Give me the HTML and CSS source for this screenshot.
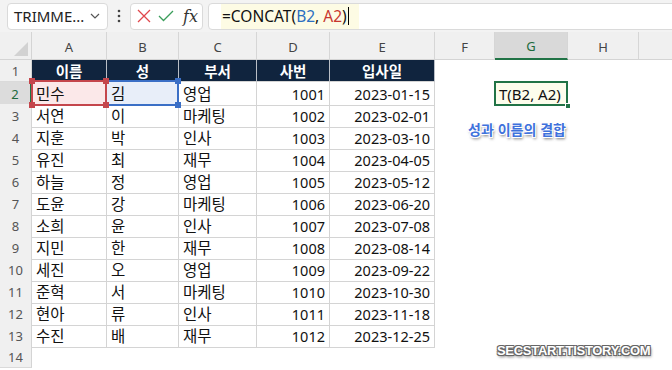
FILE: index.html
```html
<!DOCTYPE html>
<html lang="ko">
<head>
    <meta charset="UTF-8">
    <title>CONCAT</title>
    <link rel="stylesheet" href="styles.css">
</head>
<body>
    <div class="toolbar">
        <div class="namebox">
            <span>TRIMME...</span>
            <svg class="chev" width="10" height="6" viewBox="0 0 10 6"><path d="M1 1l4 4 4-4" fill="none" stroke="#555" stroke-width="1.2"/></svg>
        </div>
        <svg class="kebab" width="4" height="14" viewBox="0 0 4 14"><circle cx="2" cy="2" r="1.3" fill="#444"/><circle cx="2" cy="7" r="1.3" fill="#444"/><circle cx="2" cy="12" r="1.3" fill="#444"/></svg>
        <div class="btns">
            <svg width="14" height="14" viewBox="0 0 14 14"><path d="M1 1l12 12M13 1L1 13" stroke="#e0474c" stroke-width="1.3" fill="none"/></svg>
            <svg width="16" height="12" viewBox="0 0 16 12"><path d="M1 6l4.5 4.5L15 1" stroke="#3a9d5a" stroke-width="1.3" fill="none"/></svg>
            <span class="fx">fx</span>
        </div>
        <div class="formula">
            <span class="hl">=CONCAT(<span class="blue">B2</span>, <span class="red">A2</span>)<i class="caret"></i></span>
        </div>
    </div>

    <div class="sheet">
        <div class="row colhead">
            <div class="corner"></div>
            <div class="ch">A</div><div class="ch">B</div><div class="ch">C</div><div class="ch">D</div>
            <div class="ch">E</div><div class="ch">F</div><div class="ch active">G</div><div class="ch">H</div><div class="ch last"></div>
        </div>
        <div class="row">
            <div class="rh">1</div>
            <div class="c th">이름</div><div class="c th">성</div><div class="c th">부서</div><div class="c th">사번</div><div class="c th">입사일</div>
            <div></div><div></div><div></div><div></div>
        </div>
        <div class="row">
            <div class="rh active">2</div>
            <div class="c ref-a">민수<span class="ref red-box"><i class="h tl"></i><i class="h tr"></i><i class="h bl"></i><i class="h br"></i></span></div>
            <div class="c ref-b">김<span class="ref blue-box"><i class="h tr"></i><i class="h br"></i></span></div>
            <div class="c">영업</div><div class="c n">1001</div><div class="c n">2023-01-15</div>
            <div></div><div class="edit">T(B2, A2)<i class="fill"></i></div><div></div><div></div>
        </div>
        <div class="row">
            <div class="rh">3</div>
            <div class="c">서연</div><div class="c">이</div><div class="c">마케팅</div><div class="c n">1002</div><div class="c n">2023-02-01</div>
            <div></div><div></div><div></div><div></div>
        </div>
        <div class="row">
            <div class="rh">4</div>
            <div class="c">지훈</div><div class="c">박</div><div class="c">인사</div><div class="c n">1003</div><div class="c n">2023-03-10</div>
            <div></div><div></div><div></div><div></div>
        </div>
        <div class="row">
            <div class="rh">5</div>
            <div class="c">유진</div><div class="c">최</div><div class="c">재무</div><div class="c n">1004</div><div class="c n">2023-04-05</div>
            <div></div><div></div><div></div><div></div>
        </div>
        <div class="row">
            <div class="rh">6</div>
            <div class="c">하늘</div><div class="c">정</div><div class="c">영업</div><div class="c n">1005</div><div class="c n">2023-05-12</div>
            <div></div><div></div><div></div><div></div>
        </div>
        <div class="row">
            <div class="rh">7</div>
            <div class="c">도윤</div><div class="c">강</div><div class="c">마케팅</div><div class="c n">1006</div><div class="c n">2023-06-20</div>
            <div></div><div></div><div></div><div></div>
        </div>
        <div class="row">
            <div class="rh">8</div>
            <div class="c">소희</div><div class="c">윤</div><div class="c">인사</div><div class="c n">1007</div><div class="c n">2023-07-08</div>
            <div></div><div></div><div></div><div></div>
        </div>
        <div class="row">
            <div class="rh">9</div>
            <div class="c">지민</div><div class="c">한</div><div class="c">재무</div><div class="c n">1008</div><div class="c n">2023-08-14</div>
            <div></div><div></div><div></div><div></div>
        </div>
        <div class="row">
            <div class="rh">10</div>
            <div class="c">세진</div><div class="c">오</div><div class="c">영업</div><div class="c n">1009</div><div class="c n">2023-09-22</div>
            <div></div><div></div><div></div><div></div>
        </div>
        <div class="row">
            <div class="rh">11</div>
            <div class="c">준혁</div><div class="c">서</div><div class="c">마케팅</div><div class="c n">1010</div><div class="c n">2023-10-30</div>
            <div></div><div></div><div></div><div></div>
        </div>
        <div class="row">
            <div class="rh">12</div>
            <div class="c">현아</div><div class="c">류</div><div class="c">인사</div><div class="c n">1011</div><div class="c n">2023-11-18</div>
            <div></div><div></div><div></div><div></div>
        </div>
        <div class="row">
            <div class="rh">13</div>
            <div class="c">수진</div><div class="c">배</div><div class="c">재무</div><div class="c n">1012</div><div class="c n">2023-12-25</div>
            <div></div><div></div><div></div><div></div>
        </div>
        <div class="row">
            <div class="rh">14</div>
        </div>
    </div>

    <div class="note">성과 이름의 결합</div>
    <div class="watermark">SECSTART.TISTORY.COM</div>
</body>
</html>
```

FILE: styles.css
```css
* {
    margin: 0;
    padding: 0;
    box-sizing: border-box;
}

body {
    width: 672px;
    height: 370px;
    overflow: hidden;
    background: #fff;
    color: #111;
    font-family: "Noto Sans", "Noto Sans CJK KR", sans-serif;
    position: relative;
}

/* formula bar */
.toolbar {
    height: 32px;
    background: #f3f3f3;
    display: flex;
    align-items: center;
    padding-left: 7px;
}

.namebox {
    width: 101px;
    height: 27px;
    background: #fff;
    border: 1px solid #dadada;
    border-radius: 4px;
    display: flex;
    align-items: center;
    justify-content: space-between;
    padding: 0 7px 0 6px;
    font-size: 15px;
    color: #222;
}

.kebab {
    margin: 0 9px 0 9px;
}

.btns {
    width: 73px;
    height: 27px;
    background: #fff;
    border: 1px solid #dadada;
    border-radius: 4px;
    display: flex;
    align-items: center;
    gap: 7px;
    padding-left: 6px;
}

.fx {
    font-family: "DejaVu Serif", "Liberation Serif", serif;
    font-style: italic;
    font-size: 16px;
    color: #333;
    margin-left: 2px;
}

.formula {
    flex: 1;
    height: 27px;
    margin-left: 5px;
    margin-right: -4px;
    background: #fff;
    border: 1px solid #dadada;
    border-radius: 4px;
    padding-left: 12px;
    display: flex;
}

.hl {
    background: #fdfbe4;
    display: flex;
    align-items: center;
    padding: 0 10px 0 1px;
    font-size: 15.5px;
    color: #111;
    white-space: pre;
}

.blue { color: #2c6fc1; }
.red { color: #c8372f; }

.caret {
    display: inline-block;
    width: 1px;
    height: 18px;
    background: #000;
    margin-left: 1px;
}

/* sheet */
.row {
    display: grid;
    grid-template-columns: 32px 75px 72px 78px 73px 105px 60px 73px 71px 40px;
    height: 22px;
}

.colhead {
    height: 28px;
    background: #f0f0f0;
}

.corner {
    position: relative;
    border-right: 1px solid #d4d4d4;
    border-bottom: 1px solid #d4d4d4;
}

.corner::after {
    content: "";
    position: absolute;
    right: 3px;
    bottom: 3px;
    border-left: 14px solid transparent;
    border-bottom: 14px solid #d2d2d2;
}

.ch {
    display: flex;
    align-items: center;
    justify-content: center;
    font-size: 13px;
    color: #444;
    border-right: 1px solid #d6d6d6;
    border-bottom: 1px solid #d4d4d4;
    padding-top: 2px;
}

.ch.active {
    background: #d9d9d9;
    color: #1d6b3c;
    border-bottom: 2px solid #217346;
}

.rh {
    display: flex;
    align-items: center;
    justify-content: center;
    background: #f0f0f0;
    border-right: 1px solid #d4d4d4;
    border-bottom: 1px solid #dadada;
    font-size: 13px;
    color: #555;
}

.rh.active {
    background: #dcdcdc;
    color: #1d6b3c;
    border-right: 2px solid #217346;
}

.c {
    position: relative;
    display: flex;
    align-items: center;
    padding: 0 4px;
    font-size: 15.5px;
    border-right: 1px solid #d4d4d4;
    border-bottom: 1px solid #d4d4d4;
    white-space: nowrap;
}

.c.n {
    justify-content: flex-end;
    font-size: 14.5px;
}

.c.th {
    justify-content: center;
    background: #10243e;
    color: #fff;
    font-weight: bold;
    font-size: 14.5px;
    border-right-color: #b9bec6;
}

.ref-a { background: #fbe8e9; }
.ref-b { background: #e8eef9; }

.ref {
    position: absolute;
    left: -1px;
    top: -2px;
    right: -1px;
    bottom: -1px;
    border: 2px solid;
}

.red-box { border-color: #c4464c; z-index: 2; }
.blue-box { border-color: #3b6fc6; border-left: none; z-index: 1; }

.h {
    position: absolute;
    width: 6px;
    height: 6px;
    background: currentColor;
}

.red-box { color: #c4464c; }
.blue-box { color: #3b6fc6; }

.h.tl { left: -4px; top: -4px; }
.h.tr { right: -4px; top: -4px; }
.h.bl { left: -4px; bottom: -4px; }
.h.br { right: -4px; bottom: -4px; }

.edit {
    position: relative;
    display: flex;
    align-items: center;
    padding-left: 3px;
    font-size: 15px;
    background: #fdfdec;
    border: 2px solid #217346;
    margin: -1px 0 0 -1px;
    white-space: nowrap;
    z-index: 3;
}

.fill {
    position: absolute;
    right: -5px;
    bottom: -5px;
    width: 6px;
    height: 6px;
    background: #217346;
    border: 1px solid #fff;
}

/* annotations on top of the sheet */
.note {
    position: absolute;
    left: 468px;
    top: 119px;
    font-family: "Noto Sans CJK KR", sans-serif;
    font-weight: bold;
    font-size: 14px;
    color: #3f72dc;
    text-shadow: -1px -1px 0 #fff, 1px -1px 0 #fff, -1px 1px 0 #fff, 1px 1px 0 #fff, 1px 2px 3px rgba(0, 0, 0, 0.6);
}

.watermark {
    position: absolute;
    left: 497px;
    top: 343px;
    font-family: "Liberation Sans", sans-serif;
    font-weight: bold;
    font-size: 13px;
    letter-spacing: -0.3px;
    color: #fff;
    text-shadow: -1px -1px 0 #666, 1px -1px 0 #666, -1px 1px 0 #666, 1px 1px 0 #666, 1px 2px 3px rgba(0, 0, 0, 0.6);
}
```
